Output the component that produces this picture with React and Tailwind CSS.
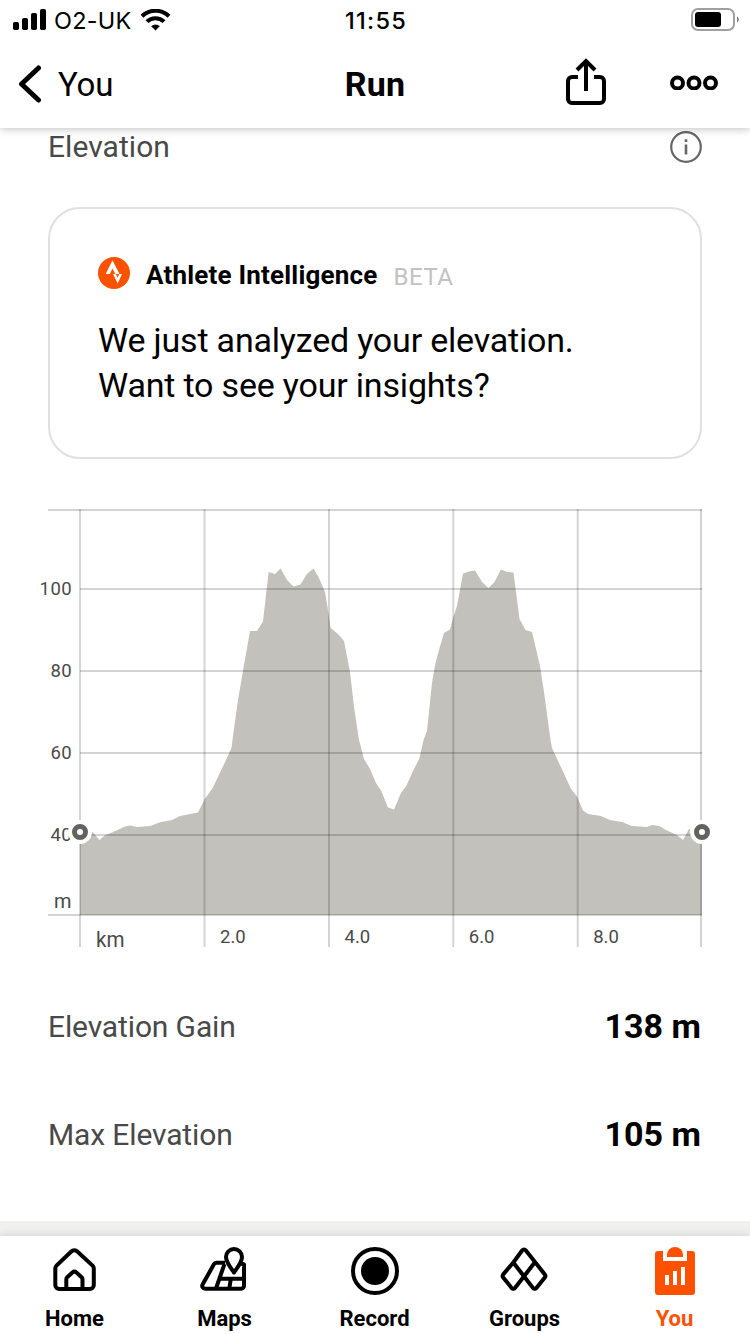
import { useState } from "react";

const elevationPoints = [
  [80, 832], [92.3, 831.7], [99.5, 840], [105, 835.3], [112, 832.5], [125, 826.5],
  [130, 825.5], [137, 827], [150, 826], [161, 822], [172, 820], [180, 816],
  [198, 812.5], [204.5, 799.5], [212.7, 788], [226, 760], [231.5, 748], [233, 736],
  [238, 700], [244, 665], [250, 631], [257, 631], [263, 621.5], [266, 595],
  [268.7, 572], [275, 574], [280.5, 568.5], [287, 580], [293.5, 586.5], [300.5, 584.5],
  [307, 574], [313.5, 568.5], [319, 578], [325, 592], [328, 610], [330.5, 628],
  [338, 634], [344, 641], [350, 672], [354, 707], [359, 740], [364, 759],
  [370, 769], [376, 783], [381.5, 791.5], [388, 807.5], [394, 809.5], [401, 793],
  [406, 786.5], [413, 771], [419.5, 758], [423.5, 740], [427, 731], [432, 683],
  [435, 665], [439, 650], [444, 633], [450, 629.5], [453, 618], [457, 606],
  [463, 573.5], [469, 571.5], [475, 570.5], [482, 582], [488.5, 588], [494.5, 582],
  [501, 569.5], [507, 572], [513.5, 572.5], [519.5, 619], [525.5, 630], [532, 632],
  [540, 666], [544, 692], [550.5, 740], [552, 748], [565, 776], [571, 789],
  [577, 796.5], [583, 810.5], [588, 814], [601, 816], [610, 820], [622, 822],
  [632, 826], [647, 827], [652, 825], [659, 826], [666, 830], [677, 835],
  [683, 840], [689, 829], [702, 832],
];

const yTicks = [
  { label: "100", y: 589 },
  { label: "80", y: 671 },
  { label: "60", y: 753 },
  { label: "40", y: 835 },
];

const xTicks = [
  { label: "2.0", x: 204.5 },
  { label: "4.0", x: 329 },
  { label: "6.0", x: 453.3 },
  { label: "8.0", x: 577.7 },
];

const StatusBar = () => (
  <div className="flex h-10 items-center justify-between pl-[13px] pr-[11px] font-['Inter',sans-serif]">
    <div className="flex w-60 items-center">
      <svg width="33" height="22" viewBox="0 0 33 22">
        <rect x="0" y="13" width="6" height="8" rx="1.8" />
        <rect x="9" y="9" width="6" height="12" rx="1.8" />
        <rect x="18" y="4" width="6" height="17" rx="1.8" />
        <rect x="27" y="0" width="6" height="21" rx="1.8" />
      </svg>
      <span className="ml-2 w-[79px] whitespace-nowrap pt-0.5 text-[23.500px] leading-none tracking-[0.2px]">
        O2-UK
      </span>
      <svg className="ml-[7px]" width="31" height="22" viewBox="0 0 31 22" fill="none" stroke="#000">
        <path d="M2 7.2a19.4 19.4 0 0 1 27 0" strokeWidth="4" />
        <path d="M7 12.6a12.2 12.2 0 0 1 17 0" strokeWidth="4" />
        <path d="M15.500 21.600l-4.300-4.400a6.200 6.200 0 0 1 8.600 0z" fill="#000" stroke="none" />
      </svg>
    </div>
    <span className="pt-0.5 text-[23.500px] font-medium leading-none tracking-[1.3px]">11:55</span>
    <div className="flex w-60 justify-end">
      <svg width="48" height="24" viewBox="0 0 48 24">
        <rect x="1" y="1" width="42" height="21" rx="6" fill="none" stroke="#a0a0a0" strokeWidth="2" />
        <rect x="4" y="4" width="26" height="15" rx="3" />
        <path d="M46 8.500c2.400 1 2.400 5 0 6z" fill="#808080" />
      </svg>
    </div>
  </div>
);

const NavBar = () => (
  <div className="flex h-[88px] items-center justify-between pl-[18px] pr-8">
    <button className="flex w-60 items-center gap-4">
      <svg width="24" height="38" viewBox="0 0 24 38" fill="none" stroke="#000" strokeWidth="5" strokeLinecap="round" strokeLinejoin="round">
        <path d="M20.500 3L3.500 19l17 16" />
      </svg>
      <span className="text-[33px] leading-none tracking-[-0.2px]">You</span>
    </button>
    <h1 className="ml-[14px] text-[34px] font-bold leading-none tracking-[0.2px]">Run</h1>
    <div className="flex w-60 items-center justify-end gap-16 pb-1">
      <svg width="40" height="48" viewBox="0 1 40 48" fill="none" stroke="#000" strokeWidth="4">
        <path d="M12 20H6a4 4 0 0 0-4 4v18a4 4 0 0 0 4 4h28a4 4 0 0 0 4-4V24a4 4 0 0 0-4-4h-6" />
        <path d="M20 34V4M11 13l9-9 9 9" />
      </svg>
      <svg width="48" height="16" viewBox="0 -1 48 16" fill="none" stroke="#000" strokeWidth="4">
        <circle cx="7.500" cy="8" r="5.500" />
        <circle cx="24" cy="8" r="5.500" />
        <circle cx="40.500" cy="8" r="5.500" />
      </svg>
    </div>
  </div>
);

const Marker = ({ x }) => (
  <g>
    <circle cx={x} cy="832" r="12" fill="#fff" />
    <circle cx={x} cy="832" r="5.500" fill="#fff" stroke="#62625f" strokeWidth="5" />
  </g>
);

const ElevationChart = () => {
  const area = `80,915 ${elevationPoints.map((p) => p.join(",")).join(" ")} 702,915`;

  return (
    <svg className="block" width="690" height="455" viewBox="30 500 690 455">
      <polygon points={area} fill="#c2c1bb" />

      {/* Grid lines */}
      <g stroke="#000" strokeOpacity="0.17" strokeWidth="2">
        <path d="M48 510H702M48 915H702" />
        {yTicks.map((tick) => (
          <path key={tick.label} d={`M80 ${tick.y}H702`} />
        ))}
        {[80, ...xTicks.map((tick) => tick.x), 701].map((x) => (
          <path key={x} d={`M${x} 509V947`} />
        ))}
      </g>

      {/* Axis labels */}
      <g fill="#494949" fontSize="18.500">
        {yTicks.map((tick) => (
          <text key={tick.label} x="72" y={tick.y + 6} textAnchor="end" letterSpacing="0.4">
            {tick.label}
          </text>
        ))}
        {xTicks.map((tick) => (
          <text key={tick.label} x={tick.x + 15.5} y="943">
            {tick.label}
          </text>
        ))}
        <text x="54" y="908" fontSize="21" textLength="17.500" lengthAdjust="spacingAndGlyphs">m</text>
        <text x="96" y="947" fontSize="22" textLength="28.500" lengthAdjust="spacingAndGlyphs">km</text>
      </g>

      <Marker x={80} />
      <Marker x={702} />
    </svg>
  );
};

const StatRow = ({ label, value }) => (
  <div className="flex h-[108px] items-center justify-between pl-12 pr-[49px]">
    <span className="pb-0.5 text-[30px] tracking-[-0.13px] text-[#494949]">{label}</span>
    <span className="pb-0.5 text-[34px] font-bold">{value}</span>
  </div>
);

const HomeIcon = () => (
  <>
    <path d="M20.300 4.500L5.500 18.600a4 4 0 0 0-1.200 2.800V38a4 4 0 0 0 4 4h30.500a4 4 0 0 0 4-4V21.400a4 4 0 0 0-1.200-2.800L26.300 4.500a4.200 4.200 0 0 0-6 0z" />
    <path d="M15.300 42V32.500a3 3 0 0 1 .9-2.200l5.200-4.700a3 3 0 0 1 4 0l5.200 4.700a3 3 0 0 1 .9 2.200V42" />
  </>
);

const MapsIcon = () => (
  <>
    <path d="M24 15.800H15.500a3 3 0 0 0-2.600 1.500L1.600 37.500a2.900 2.900 0 0 0 2.500 4.300H40a3 3 0 0 0 3-3V17.500l-3-1" />
    <path d="M23.500 17L14.800 42M18 31.700H43M29.800 32L28.200 42" />
    <path d="M33 25.500c-2.200-3.200-8-10-8-15.500a8 8 0 0 1 16 0c0 5.500-5.800 12.300-8 15.500z" fill="#fff" />
  </>
);

const RecordIcon = () => (
  <>
    <circle cx="24" cy="24" r="22" />
    <circle cx="24" cy="24" r="14" fill="currentColor" stroke="none" />
  </>
);

const GroupsIcon = () => (
  <>
    <path d="M12.300 15.500L21.300 3.300a2.200 2.200 0 0 1 3.400 0L43.800 27.400a2.400 2.400 0 0 1 0 3L35.400 40.900a2.200 2.200 0 0 1-3.400 0L12.300 15.500" />
    <path d="M33.700 15.500L14 40.900a2.200 2.200 0 0 1-3.400 0L2.200 30.400a2.400 2.400 0 0 1 0-3L12.300 15.500" />
  </>
);

const YouIcon = () => (
  <g stroke="none">
    <path d="M7 4H12V14H36V4H41a3 3 0 0 1 3 3V45a3 3 0 0 1-3 3H7a3 3 0 0 1-3-3V7a3 3 0 0 1 3-3z" fill="currentColor" />
    <path d="M16 10V8a8 8 0 0 1 16 0v2z" fill="currentColor" />
    <path d="M14 28h4v10h-4zM22 24h4v14h-4zM30 20h4v18h-4z" fill="#fff" />
  </g>
);

const tabs = [
  { name: "Home", Icon: HomeIcon },
  { name: "Maps", Icon: MapsIcon },
  { name: "Record", Icon: RecordIcon },
  { name: "Groups", Icon: GroupsIcon },
  { name: "You", Icon: YouIcon },
];

const TabBar = ({ activeTab, onSelect }) => (
  <nav className="z-10 grid h-[98px] shrink-0 grid-cols-5 bg-white shadow-[0_-1px_8px_rgba(0,0,0,0.12)]">
    {tabs.map(({ name, Icon }) => (
      <button
        key={name}
        onClick={() => onSelect(name)}
        className={`flex flex-col items-center pt-[11px] ${
          activeTab === name ? "text-[#fc5200]" : "text-black"
        }`}
      >
        <svg className="overflow-visible" width="48" height="48" viewBox="0 0 48 48" fill="none" stroke="currentColor" strokeWidth="4" strokeLinejoin="round">
          <Icon />
        </svg>
        <span className="mr-px mt-3 text-[22px] font-bold leading-6">{name}</span>
      </button>
    ))}
  </nav>
);

const App = () => {
  const [activeTab, setActiveTab] = useState("You");

  return (
    <div className="flex h-[1334px] w-[750px] flex-col overflow-hidden bg-white font-['Roboto','Inter',sans-serif] text-black">
      <header className="z-10 h-32 shrink-0 bg-white shadow-[0_1px_8px_rgba(0,0,0,0.25)]">
        <StatusBar />
        <NavBar />
      </header>

      <main className="h-[1108px] shrink-0">
        <div className="flex h-[79px] items-start justify-between px-12 pt-[3px]">
          <h2 className="text-[30px] leading-8 tracking-[0.05px] text-[#494949]">Elevation</h2>
          <svg width="32" height="32" viewBox="0 0 32 32" fill="none" stroke="#666" strokeWidth="2.200">
            <circle cx="16" cy="16" r="14.800" />
            <path d="M16 13.500V23.500M16 8.300V11" strokeWidth="2.600" />
          </svg>
        </div>

        <section className="mx-12 h-[252px] rounded-[32px] border-2 border-[#e0e0e0] px-12 pt-12">
          <div className="flex h-8 items-center">
            <svg width="32" height="32" viewBox="0 0 32 32">
              <circle cx="16" cy="16" r="16" fill="#fc5200" />
              <path d="M14.500 3.300L21.500 17h-4.200l-2.800-5.500L11.800 17H7.700zM24 17l-4.300 9.500L15 17h2.800l1.900 3.700L21.200 17z" fill="#fff" />
            </svg>
            <span className="ml-4 mt-1 text-[26px] font-bold leading-8 tracking-[0.2px]">
              Athlete Intelligence
            </span>
            <span className="ml-4 mt-2 text-2xl leading-8 tracking-[0.5px] text-[#c2c2c2]">BETA</span>
          </div>
          <p className="mt-[29px] text-[34px] leading-[45px] tracking-[-0.19px]">
            We just analyzed your elevation.
            <br />
            Want to see your insights?
          </p>
        </section>

        <div className="pl-[30px] pt-[41px]">
          <ElevationChart />
        </div>

        <div className="pt-[18px]">
          <StatRow label="Elevation Gain" value="138 m" />
          <StatRow label="Max Elevation" value="105 m" />
        </div>

        <div className="mt-8 h-[15px] bg-[#f0f0ee]"></div>
      </main>

      <TabBar activeTab={activeTab} onSelect={setActiveTab} />
    </div>
  );
};

export default App;
